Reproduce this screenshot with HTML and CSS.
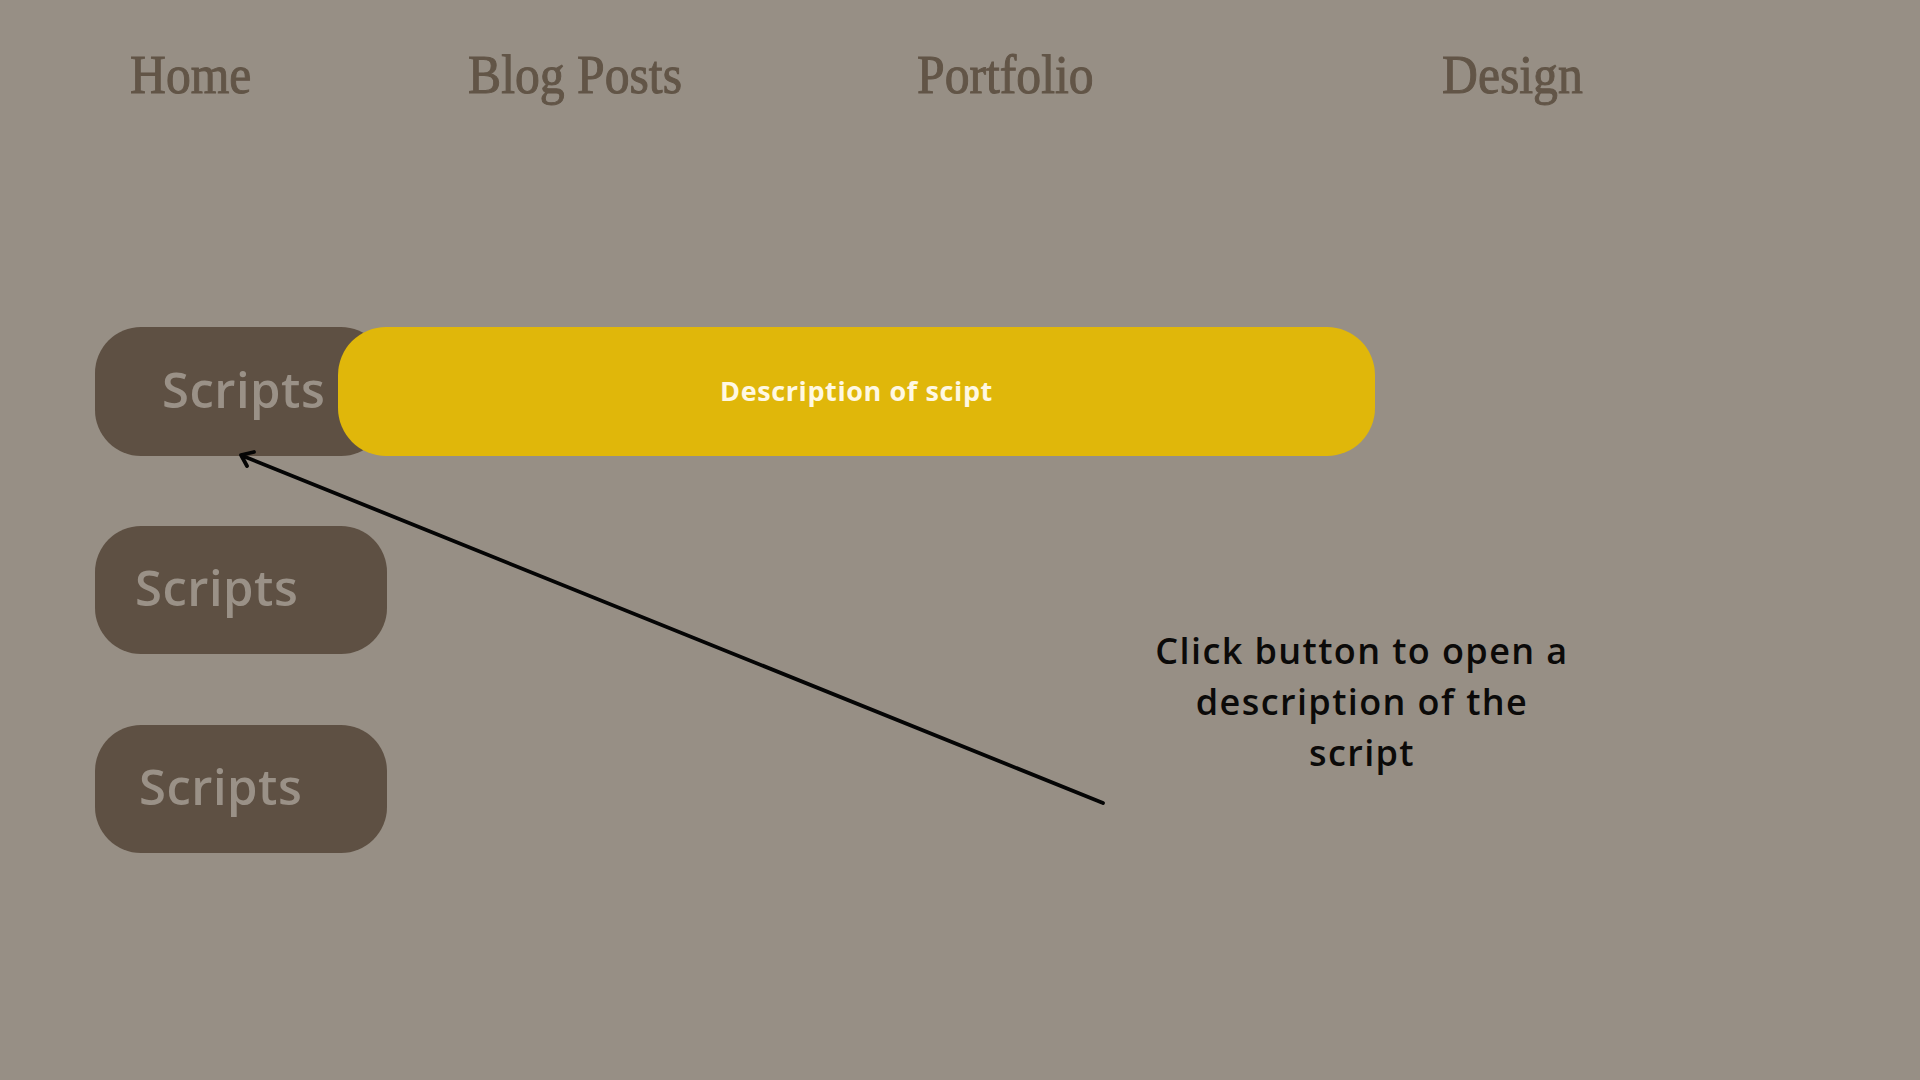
FILE: index.html
```html
<!DOCTYPE html>
<html lang="en">
<head>
<meta charset="utf-8">
<title>Scripts</title>
<link rel="stylesheet" href="styles.css">
</head>
<body>
<div class="page">
  <nav class="nav">
    <a class="nav-item" href="#"><span>Home</span></a>
    <a class="nav-item" href="#"><span>Blog Posts</span></a>
    <a class="nav-item" href="#"><span>Portfolio</span></a>
    <a class="nav-item" href="#"><span>Design</span></a>
  </nav>

  <main class="scripts">
    <div class="script-row">
      <button class="script-btn btn-open">Scripts</button>
      <div class="description">Description of scipt</div>
    </div>
    <div class="script-row">
      <button class="script-btn btn-b">Scripts</button>
    </div>
    <div class="script-row">
      <button class="script-btn btn-c">Scripts</button>
    </div>
  </main>

  <p class="note">Click button to open a description of the script</p>

  <svg class="arrow" width="1920" height="1080" viewBox="0 0 1920 1080" aria-hidden="true">
    <g stroke="#050505" stroke-width="3.8" stroke-linecap="round" stroke-linejoin="round" fill="none">
      <line x1="1103" y1="803" x2="243" y2="456"/>
      <polyline points="254,452 241,455 247,466"/>
    </g>
  </svg>
</div>
</body>
</html>
```

FILE: styles.css
```css
html, body {
  margin: 0;
  padding: 0;
}

body {
  background: #978f85;
  font-family: "Open Sans", "Liberation Sans", sans-serif;
}

.page {
  position: relative;
  width: 1920px;
  height: 1080px;
  overflow: hidden;
}

.nav {
  display: grid;
  grid-template-columns: 338px 449px 525px auto;
  padding: 40px 0 0 130px;
  height: 80px;
}

.nav-item {
  text-decoration: none;
  color: #625547;
  font-family: "Liberation Serif", "Times New Roman", serif;
  font-size: 54px;
  line-height: 70px;
  white-space: nowrap;
}

.nav-item span {
  display: inline-block;
  transform: scaleX(0.92);
  transform-origin: left center;
  -webkit-text-stroke: 1px #625547;
}

.scripts {
  display: flex;
  flex-direction: column;
  gap: 71px;
  padding: 207px 0 0 95px;
}

.script-row {
  position: relative;
  height: 128px;
}

.script-btn {
  width: 292px;
  height: 128px;
  border: 0;
  border-radius: 46px;
  background: #5e5043;
  color: #9a9187;
  font-family: "Open Sans", "Liberation Sans", sans-serif;
  font-weight: 600;
  font-size: 49px;
  letter-spacing: 0.5px;
  text-align: left;
  padding: 0 0 6px 40px;
  cursor: pointer;
}

.btn-open { padding-left: 67px; height: 129px; }
.btn-b { padding-left: 40px; }
.btn-c { padding-left: 44px; }

.description {
  position: absolute;
  left: 243px;
  top: 0;
  width: 1037px;
  height: 129px;
  border-radius: 48px;
  background: #e0b70a;
  color: #fff8e2;
  font-weight: 700;
  font-size: 27px;
  letter-spacing: 0.6px;
  display: flex;
  align-items: center;
  justify-content: center;
  padding-bottom: 2px;
  box-sizing: border-box;
}

.note {
  position: absolute;
  left: 1144px;
  top: 625px;
  width: 436px;
  margin: 0;
  text-align: center;
  color: #0b0a09;
  font-weight: 600;
  font-size: 36px;
  line-height: 51px;
  letter-spacing: 1.4px;
}

.arrow {
  position: absolute;
  left: 0;
  top: 0;
  pointer-events: none;
}
```
